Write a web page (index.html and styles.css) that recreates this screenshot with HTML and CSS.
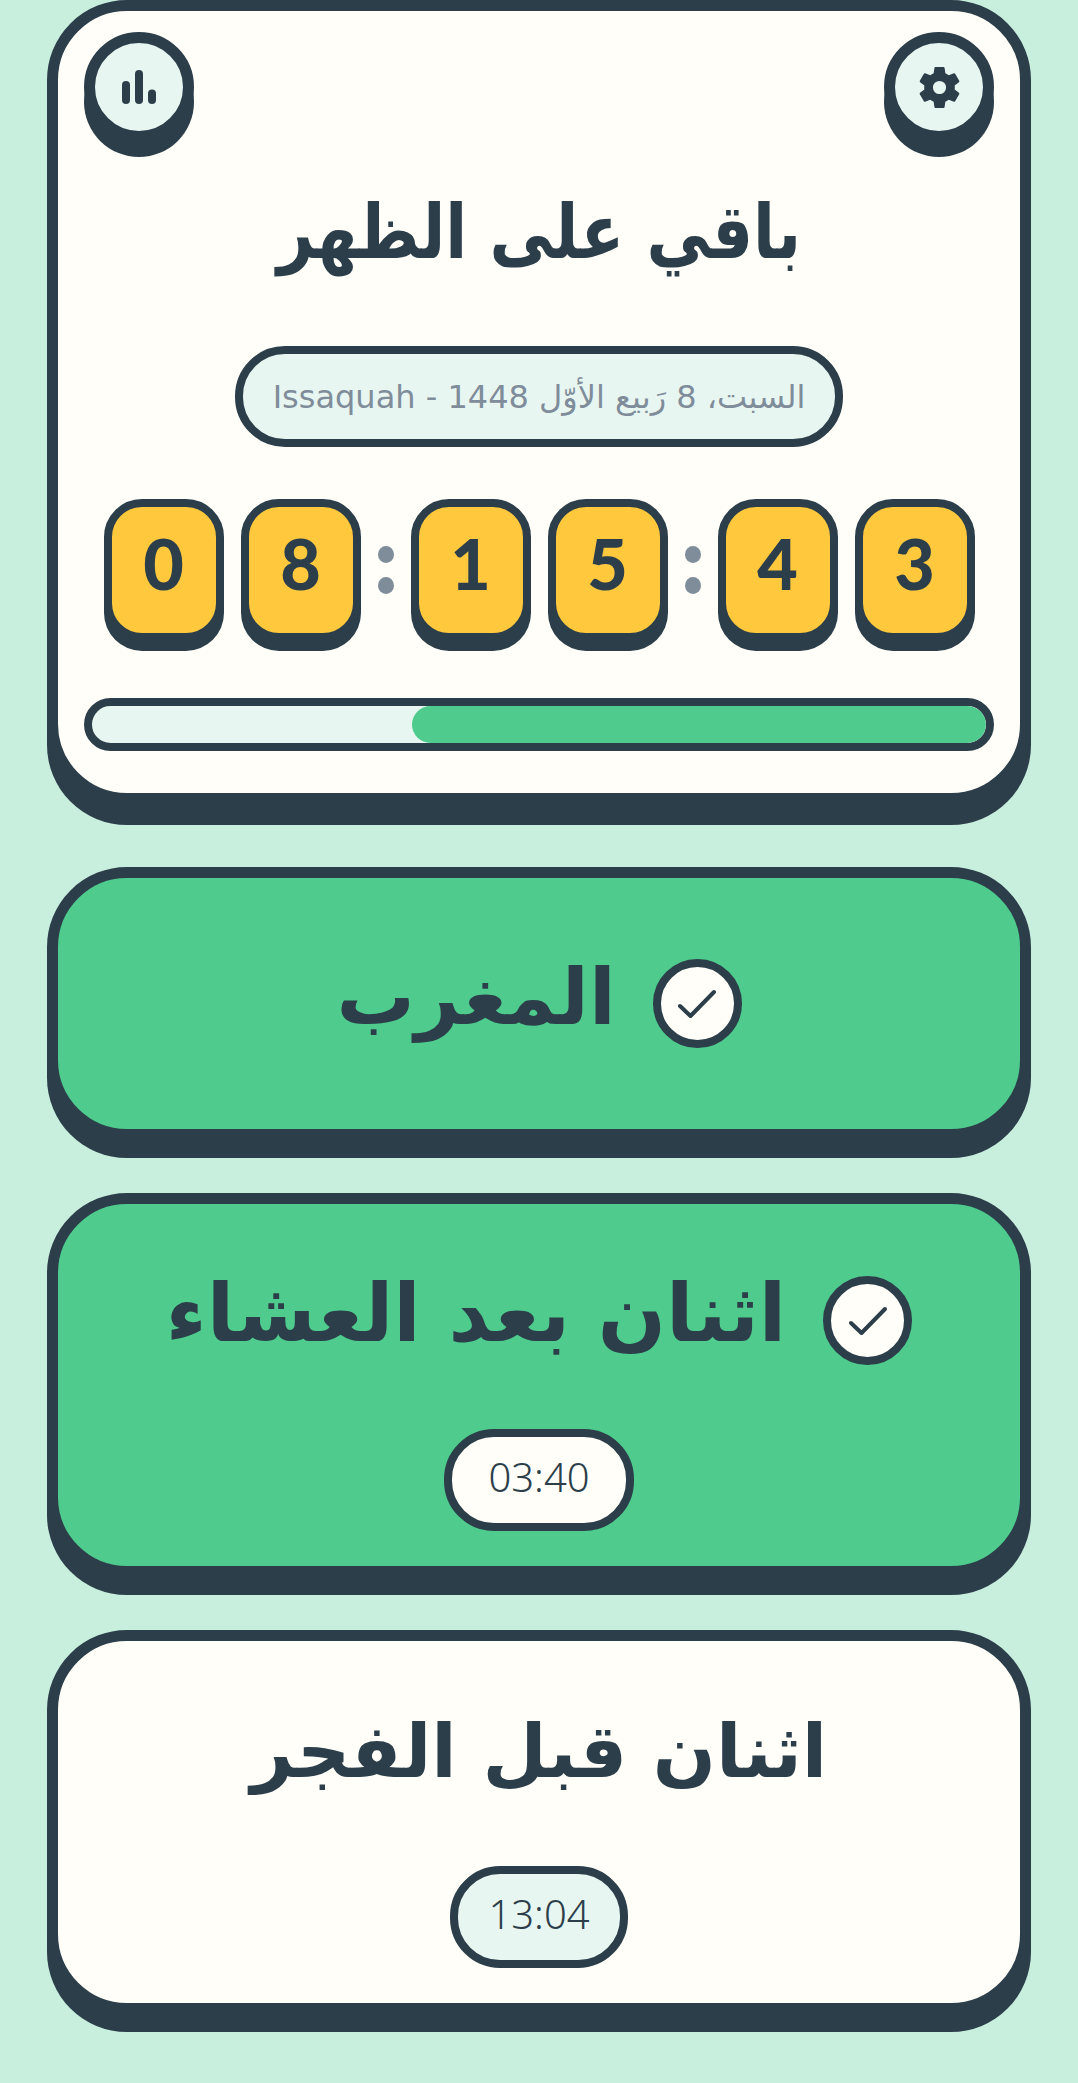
FILE: index.html
```
<!DOCTYPE html>
<html lang="ar" dir="rtl">
<head>
<meta charset="utf-8">
<title>باقي على الظهر</title>
<link rel="stylesheet" href="styles.css">
</head>
<body>
<main class="page">
  <section class="card hero">
    <button class="round-btn round-btn-settings" aria-label="settings">
      <svg class="gear" viewBox="0 0 24 24"><path fill-rule="evenodd" d="M19.14 12.94c.04-.3.06-.61.06-.94 0-.32-.02-.64-.07-.94l2.03-1.58c.18-.14.23-.41.12-.61l-1.92-3.32c-.12-.22-.37-.29-.59-.22l-2.39.96c-.5-.38-1.03-.7-1.62-.94l-.36-2.54c-.04-.24-.24-.41-.48-.41h-3.84c-.24 0-.43.17-.47.41l-.36 2.54c-.59.24-1.13.57-1.62.94l-2.39-.96c-.22-.08-.47 0-.59.22L2.74 8.87c-.12.21-.08.47.12.61l2.03 1.58c-.05.3-.09.63-.09.94s.02.64.07.94l-2.03 1.58c-.18.14-.23.41-.12.61l1.92 3.32c.12.22.37.29.59.22l2.39-.96c.5.38 1.03.7 1.62.94l.36 2.54c.05.24.24.41.48.41h3.84c.24 0 .44-.17.47-.41l.36-2.54c.59-.24 1.13-.56 1.62-.94l2.39.96c.22.08.47 0 .59-.22l1.92-3.32c.12-.22.07-.47-.12-.61l-2.01-1.58zM12 15.1a3.1 3.1 0 1 1 0-6.2 3.1 3.1 0 0 1 0 6.2z"/></svg>
    </button>
    <button class="round-btn round-btn-stats" aria-label="stats">
      <svg class="bars" viewBox="0 0 34 34"><rect x="0" y="11" width="8" height="23" rx="4"/><rect x="13" y="0" width="8" height="34" rx="4"/><rect x="26" y="19.500" width="8" height="14.500" rx="4"/></svg>
    </button>
    <h1 class="hero-title">باقي على الظهر</h1>
    <div class="date-pill">السبت، 8 رَبيع الأوّل 1448 - Issaquah</div>
    <div class="countdown" dir="ltr">
      <span class="tile">0</span><span class="tile">8</span>
      <span class="colon"><i></i><i></i></span>
      <span class="tile">1</span><span class="tile">5</span>
      <span class="colon"><i></i><i></i></span>
      <span class="tile">4</span><span class="tile">3</span>
    </div>
    <div class="progress"><div class="progress-fill" style="width:64.2%"></div></div>
  </section>

  <section class="card prayer prayer-done prayer-single">
    <div class="prayer-row">
      <span class="check"><svg viewBox="0 0 40 30"><path d="M3 17 L13.500 27 L37 3"/></svg></span>
      <h2 class="prayer-name">المغرب</h2>
    </div>
  </section>

  <section class="card prayer prayer-done">
    <div class="prayer-row">
      <span class="check"><svg viewBox="0 0 40 30"><path d="M3 17 L13.500 27 L37 3"/></svg></span>
      <h2 class="prayer-name prayer-name-wide">اثنان بعد العشاء</h2>
    </div>
    <div class="time-pill time-pill-white">03:40</div>
  </section>

  <section class="card prayer">
    <div class="prayer-row">
      <h2 class="prayer-name prayer-name-narrow">اثنان قبل الفجر</h2>
    </div>
    <div class="time-pill">13:04</div>
  </section>
</main>
</body>
</html>
```
FILE: styles.css
```
* { box-sizing: border-box; }
html, body { margin: 0; padding: 0; }
body {
  background: #c8eedd;
  color: #2c3e4a;
  font-family: "DejaVu Sans", "Noto Sans", sans-serif;
}
.page {
  display: flex;
  flex-direction: column;
  gap: 53px;
  padding: 0 47px 51px;
}
.card {
  position: relative;
  border: 11px solid #2c3e4a;
  border-radius: 80px;
  background: #fffef9;
  box-shadow: 0 18px 0 #2c3e4a;
}
.hero {
  display: flex;
  flex-direction: column;
  align-items: center;
  height: 804px;
  margin-bottom: 10px;
  padding: 0 26px;
  box-shadow: 0 21px 0 #2c3e4a;
}
.round-btn {
  position: absolute;
  top: 21px;
  display: flex;
  align-items: center;
  justify-content: center;
  width: 110px;
  height: 110px;
  padding: 0;
  border: 11px solid #2c3e4a;
  border-radius: 50%;
  background: #e8f6f1;
  box-shadow: 0 15px 0 #2c3e4a;
}
.round-btn-stats { left: 26px; }
.round-btn-settings { right: 26px; }
.bars { width: 34px; height: 34px; fill: #2c3e4a; }
.gear { width: 51px; height: 51px; fill: #2c3e4a; }
.hero-title {
  margin: 0;
  height: 335px;
  padding-top: 153px;
  font-size: 64px;
  font-weight: 700;
  line-height: 120px;
  text-align: center;
  transform: scaleY(1.18);
}
.date-pill {
  display: flex;
  align-items: center;
  justify-content: center;
  width: 608px;
  height: 101px;
  border: 8px solid #2c3e4a;
  border-radius: 50px;
  background: #e8f6f1;
  color: #7f8c9a;
  font-size: 32px;
  white-space: nowrap;
}
.countdown {
  display: flex;
  align-items: center;
  gap: 17px;
  margin-top: 52px;
}
.tile {
  display: flex;
  align-items: center;
  justify-content: center;
  width: 120px;
  height: 142px;
  padding-bottom: 15px;
  border: 8px solid #2c3e4a;
  border-radius: 38px;
  background: #ffc83d;
  box-shadow: 0 10px 0 #2c3e4a;
  font-family: Lato, sans-serif;
  font-size: 70px;
  font-weight: 900;
}
.colon {
  display: flex;
  flex-direction: column;
  gap: 14px;
}
.colon i {
  display: block;
  width: 16px;
  height: 17px;
  border-radius: 50%;
  background: #7f8c9a;
}
.progress {
  width: 910px;
  height: 53px;
  margin-top: 57px;
  border: 8px solid #2c3e4a;
  border-radius: 27px;
  background: #e8f6f1;
  overflow: hidden;
}
.progress-fill {
  height: 100%;
  border-radius: 20px;
  background: #4ecb8d;
}
.prayer {
  display: flex;
  flex-direction: column;
  align-items: center;
  gap: 20px;
  padding: 28px 0 35px;
}
.prayer-single { padding: 37px 0; }
.prayer-done { background: #4ecb8d; }
.prayer-row {
  display: flex;
  align-items: center;
  justify-content: center;
  gap: 37px;
  height: 177px;
}
.prayer-name {
  margin: 0 0 14px;
  font-size: 78px;
  font-weight: 700;
  line-height: 1;
}
.prayer-name-wide { font-size: 80px; }
.prayer-name-narrow { font-size: 74px; }
.check {
  display: flex;
  align-items: center;
  justify-content: center;
  width: 89px;
  height: 89px;
  border: 8px solid #2c3e4a;
  border-radius: 50%;
  background: #fffef9;
}
.check svg {
  width: 40px;
  height: 30px;
  fill: none;
  stroke: #2c3e4a;
  stroke-width: 4;
  stroke-linecap: round;
  stroke-linejoin: round;
}
.time-pill {
  display: flex;
  align-items: center;
  justify-content: center;
  height: 102px;
  padding: 0 30px 8px;
  border: 8px solid #2c3e4a;
  border-radius: 50px;
  background: #e8f6f1;
  font-family: "Noto Sans", sans-serif;
  font-size: 40px;
  font-weight: 350;
}
.time-pill-white { background: #fffef9; padding: 0 36px 8px; }
```
